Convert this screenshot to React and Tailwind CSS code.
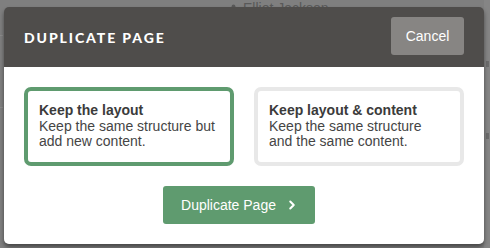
import React from 'react';
import { ChevronRight, User } from 'lucide-react';

const sans = { fontFamily: '"Liberation Sans", Arial, sans-serif' };

const Option = ({ title, text, active }) => (
  <div
    className={`flex-1 h-[79px] rounded-[7px] border-[4px] px-[11px] pt-[12px] text-[14px] leading-[15px] ${
      active ? 'border-[#5f9b6f]' : 'border-[#e8e8e8]'
    }`}
  >
    <div className="font-bold text-[#3b3b3b]">{title}</div>
    <div className="text-[#454545] mt-[1px]">{text}</div>
  </div>
);

export default function App() {
  return (
    <div className="relative w-[490px] h-[248px] overflow-hidden bg-[#7f7f7f] pt-[7px] pl-[4px]" style={sans}>
      {/* page behind the overlay */}
      <div className="absolute left-[228px] top-[-2px] flex items-center gap-[4px] text-[14px] text-[#595959]">
        <User size={11} fill="#595959" strokeWidth={0} />
        <span>Elliot Jackson</span>
      </div>
      <div className="absolute left-0 top-[35px] w-full border-t border-dashed border-[#8c8c8c]" />
      <div className="absolute left-0 top-[107px] w-full border-t border-dashed border-[#8c8c8c]" />
      <div className="absolute right-0 top-0 w-[6px] h-full bg-[#858585]" />
      <div className="absolute right-[1px] top-[61px] w-[3px] h-[6px] bg-[#6b6b6b]" />
      <div className="absolute right-[1px] top-[133px] w-[3px] h-[6px] bg-[#6b6b6b]" />

      <div className="relative w-[480px] rounded-[5px] overflow-hidden shadow-[0_3px_4px_rgba(0,0,0,0.45)]">
        <div className="h-[60px] bg-[#4f4d4b] flex items-center justify-between pl-[20px] pr-[20px]">
          <div
            className="text-white font-black text-[14px] tracking-[1.9px]"
            style={{ fontFamily: 'Lato, "Open Sans", sans-serif' }}
          >
            DUPLICATE PAGE
          </div>
          <button className="mt-[-2px] w-[73px] h-[38px] rounded-[3px] bg-[#878583] text-white text-[14px]">
            Cancel
          </button>
        </div>
        <div className="bg-white px-[20px] pt-[20px] pb-[20px]">
          <div className="flex gap-[20px]">
            <Option active title="Keep the layout" text={<>Keep the same structure but<br />add new content.</>} />
            <Option title="Keep layout & content" text={<>Keep the same structure<br />and the same content.</>} />
          </div>
          <div className="flex justify-center mt-[20px] pr-[10px]">
            <button className="w-[152px] h-[38px] rounded-[3px] bg-[#5f9b6f] text-white text-[14px] flex items-center justify-center gap-[9px] pl-[2px]">
              <span>Duplicate Page</span>
              <ChevronRight size={14} strokeWidth={3.5} />
            </button>
          </div>
        </div>
      </div>
    </div>
  );
}
